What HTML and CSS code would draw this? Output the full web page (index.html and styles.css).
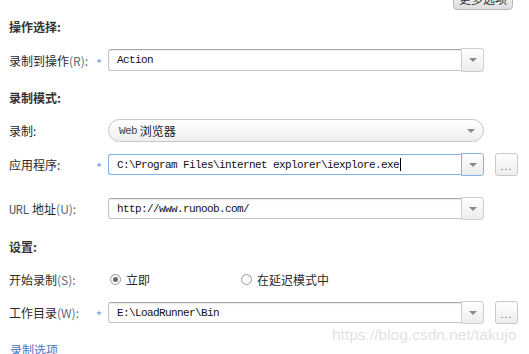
FILE: index.html
```html
<!DOCTYPE html>
<html lang="zh-CN">
<head>
<meta charset="utf-8">
<title>录制选项</title>
<link rel="stylesheet" href="styles.css">
</head>
<body>
<div class="page">
  <div class="topbar"><button class="more-btn">更多选项</button></div>

  <div class="section h1">操作选择:</div>
  <div class="row r1">
    <div class="label">录制到操作<span class="hk">(R):</span></div>
    <div class="star">*</div>
    <div class="combo">
      <div class="field mono">Action</div>
      <div class="drop"><span class="tri"></span></div>
    </div>
  </div>

  <div class="section h2">录制模式:</div>
  <div class="row r2">
    <div class="label">录制:</div>
    <div class="star"></div>
    <div class="pill"><span class="mono">Web</span>&nbsp;浏览器<span class="tri pill-tri"></span></div>
  </div>
  <div class="row r3">
    <div class="label">应用程序:</div>
    <div class="star">*</div>
    <div class="combo focus">
      <div class="field mono">C:\Program Files\internet explorer\iexplore.exe<span class="caret"></span></div>
      <div class="drop"><span class="tri"></span></div>
    </div>
    <button class="dots">...</button>
  </div>
  <div class="row r4">
    <div class="label"><span class="mono lab-mono">URL</span> 地址<span class="hk">(U):</span></div>
    <div class="star"></div>
    <div class="combo">
      <div class="field mono">http://www.runoob.com/</div>
      <div class="drop"><span class="tri"></span></div>
    </div>
  </div>

  <div class="section h3">设置:</div>
  <div class="row r5">
    <div class="label">开始录制<span class="hk">(S):</span></div>
    <div class="star"></div>
    <div class="radios">
      <div class="opt opt1"><span class="radio on"></span>立即</div>
      <div class="opt"><span class="radio"></span>在延迟模式中</div>
    </div>
  </div>
  <div class="row r6">
    <div class="label">工作目录<span class="hk">(W):</span></div>
    <div class="star">*</div>
    <div class="combo">
      <div class="field mono">E:\LoadRunner\Bin</div>
      <div class="drop"><span class="tri"></span></div>
    </div>
    <button class="dots">...</button>
  </div>

  <div class="link">录制选项</div>

  <div class="watermark">https://blog.csdn.net/takujo</div>
</div>
</body>
</html>
```

FILE: styles.css
```css
html, body {
  margin: 0;
  padding: 0;
  background: #ffffff;
  overflow: hidden;
}
body {
  width: 529px;
  height: 354px;
  font-family: "Noto Sans CJK SC", "Liberation Sans", sans-serif;
  font-size: 12px;
  color: #333333;
}
.page {
  position: relative;
  padding-left: 9px;
  height: 354px;
  display: flex;
  flex-direction: column;
}
.mono {
  font-family: "Liberation Mono", "Noto Sans CJK SC", monospace;
  font-size: 11px;
  letter-spacing: -0.6px;
}
.topbar {
  height: 10px;
  display: flex;
  justify-content: flex-end;
  padding-right: 16px;
  overflow: visible;
}
.more-btn {
  width: 60px;
  height: 22px;
  margin-top: -12px;
  border: 1px solid #b8b8b8;
  border-radius: 4px;
  background: linear-gradient(#fafafa, #dedede);
  font-family: "Noto Sans CJK SC", sans-serif;
  font-size: 12px;
  color: #333;
  padding: 0;
  line-height: 20px;
}
.section {
  height: 16px;
  line-height: 16px;
  font-weight: bold;
  color: #333;
}
.h1 { margin-top: 9px; }
.h2 { margin-top: 18px; }
.h3 { margin-top: 19px; }

.row {
  display: flex;
  align-items: center;
  height: 23px;
}
.r1 { margin-top: 13px; height: 24px; }
.r2 { margin-top: 13px; }
.r3 { margin-top: 11px; }
.r4 { margin-top: 21px; }
.r5 { margin-top: 13px; }
.r6 { margin-top: 10px; }

.label {
  width: 87px;
  flex: none;
  white-space: nowrap;
  color: #2a2a2a;
}
.hk {
  color: #5a6a7c;
}
.lab-mono {
  color: #4a5a6c;
  font-size: 12px;
  letter-spacing: -0.4px;
}
.star {
  width: 12px;
  flex: none;
  color: #7aa6de;
  font-size: 13px;
  line-height: 23px;
  padding-top: 3px;
  box-sizing: border-box;
  height: 23px;
}
.combo {
  width: 376px;
  height: 23px;
  flex: none;
  display: flex;
  box-sizing: border-box;
}
.r1 .combo { height: 24px; }
.field {
  flex: 1;
  box-sizing: border-box;
  border: 1px solid #c4c4c4;
  border-top-color: #a8a8a8;
  border-right: none;
  border-radius: 3px 0 0 3px;
  box-shadow: inset 0 1px 1px rgba(0,0,0,0.08);
  padding-left: 8px;
  display: flex;
  align-items: center;
  color: #111;
  white-space: nowrap;
  margin: 1px 0;
}
.drop {
  width: 23px;
  flex: none;
  box-sizing: border-box;
  border: 1px solid #cfcfcf;
  border-radius: 0 3px 3px 0;
  background: linear-gradient(#ffffff, #ececec);
  display: flex;
  align-items: center;
  justify-content: center;
}
.tri {
  width: 0;
  height: 0;
  border-left: 4px solid transparent;
  border-right: 4px solid transparent;
  border-top: 4px solid #8a8a8a;
}
.focus .field {
  border-color: #82b3e8;
  box-shadow: none;
}
.focus .drop {
  border-color: #82b3e8;
}
.caret {
  display: inline-block;
  width: 1px;
  height: 13px;
  background: #000;
  margin-left: 1px;
}
.pill {
  width: 376px;
  height: 23px;
  flex: none;
  box-sizing: border-box;
  border: 1px solid #c8c8c8;
  border-radius: 12px;
  background: linear-gradient(#ffffff, #eeeeee);
  display: flex;
  align-items: center;
  padding-left: 10px;
  color: #222;
  position: relative;
}
.pill .mono {
  color: #444;
}
.pill-tri {
  margin-left: auto;
  margin-right: 8px;
}
.dots {
  width: 23px;
  height: 23px;
  margin-left: 11px;
  flex: none;
  box-sizing: border-box;
  border: 1px solid #c8c8c8;
  border-radius: 3px;
  background: linear-gradient(#ffffff, #ededed);
  font-family: "Liberation Sans", sans-serif;
  font-size: 10px;
  color: #555;
  padding: 4px 0 0 0;
  letter-spacing: 1px;
  text-align: center;
}
.radios {
  display: flex;
  align-items: center;
  margin-left: 2px;
  color: #2a2a2a;
}
.opt {
  display: flex;
  align-items: center;
}
.opt1 {
  width: 131px;
}
.radio {
  width: 11px;
  height: 11px;
  box-sizing: border-box;
  border: 1px solid #9a9a9a;
  border-radius: 50%;
  background: linear-gradient(#f4f4f4, #ffffff);
  margin-right: 5px;
  position: relative;
}
.radio.on::after {
  content: "";
  position: absolute;
  left: 2px;
  top: 2px;
  width: 5px;
  height: 5px;
  border-radius: 50%;
  background: #6a6a6a;
}
.link {
  margin-top: 18px;
  height: 16px;
  line-height: 16px;
  color: #4a74c4;
  margin-left: 1px;
}
.watermark {
  position: absolute;
  left: 332px;
  top: 326px;
  font-family: "Liberation Sans", sans-serif;
  font-size: 15.5px;
  color: rgba(200, 200, 200, 0.55);
  white-space: nowrap;
}
```
